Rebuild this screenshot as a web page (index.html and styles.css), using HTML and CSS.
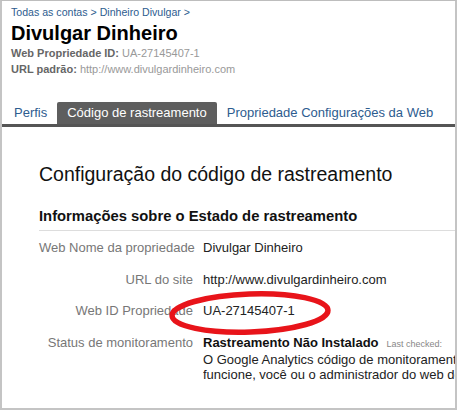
FILE: index.html
```html
<!DOCTYPE html>
<html lang="pt">
<head>
<meta charset="utf-8">
<title>Divulgar Dinheiro</title>
<link rel="stylesheet" href="styles.css">
</head>
<body>
<div class="frame">
  <div class="header">
    <div class="crumbs"><a href="#">Todas as contas</a> &gt; <a href="#">Dinheiro Divulgar</a> &gt;</div>
    <h1 class="title">Divulgar Dinheiro</h1>
    <div class="meta"><b>Web Propriedade ID:</b> <span>UA-27145407-1</span></div>
    <div class="meta"><b>URL padrão:</b> <span>http://www.divulgardinheiro.com</span></div>
  </div>
  <div class="tabs">
    <a class="tab" href="#">Perfis</a>
    <a class="tab active" href="#">Código de rastreamento</a>
    <a class="tab" href="#">Propriedade Configurações da Web</a>
  </div>
  <div class="content">
    <h2 class="section-title">Configuração do código de rastreamento</h2>
    <h3 class="sub-title">Informações sobre o Estado de rastreamento</h3>
    <div class="info">
      <div class="label">Web Nome da propriedade</div>
      <div class="value">Divulgar Dinheiro</div>
      <div class="label">URL do site</div>
      <div class="value">http://www.divulgardinheiro.com</div>
      <div class="label">Web ID Propriedade</div>
      <div class="value">UA-27145407-1</div>
      <div class="label">Status de monitoramento</div>
      <div class="value status">
        <div class="line"><b>Rastreamento Não Instalado</b><span class="checked">Last checked:</span></div>
        <div class="line">O Google Analytics código de monitoramento</div>
        <div class="line">funcione, você ou o administrador do web deste site</div>
      </div>
    </div>
    <svg class="circle" width="170" height="52" viewBox="0 0 170 52" aria-hidden="true">
      <ellipse cx="85" cy="26" rx="78" ry="19" fill="none" stroke="#e8141a" stroke-width="5.5" transform="rotate(-2 85 26)"/>
    </svg>
  </div>
</div>
</body>
</html>
```
FILE: styles.css
```css
html, body {
  margin: 0;
  padding: 0;
  background: #fff;
}
.frame {
  position: relative;
  width: 457px;
  height: 410px;
  box-sizing: border-box;
  border-top: 1px solid #bdbdbd;
  border-left: 2px solid #c4c4c4;
  border-right: 2px solid #c4c4c4;
  border-bottom: 2px solid #c4c4c4;
  overflow: hidden;
  font-family: "Liberation Sans", Arial, sans-serif;
  color: #222;
}
.header {
  padding: 4px 0 0 9px;
}
.crumbs {
  font-size: 10.6px;
  line-height: 14px;
  color: #2d5c8f;
}
.crumbs a {
  color: #2d5c8f;
  text-decoration: none;
}
.title {
  margin: 3px 0 0;
  font-size: 20px;
  line-height: 23px;
  font-weight: bold;
  color: #000;
}
.meta {
  font-size: 11px;
  line-height: 16px;
  color: #999;
  white-space: nowrap;
}
.meta b {
  color: #666;
}
.tabs {
  display: flex;
  margin-top: 25px;
  padding-left: 2px;
  border-bottom: 3px solid #555;
  width: 452px;
}
.tab {
  font-size: 13px;
  line-height: 22px;
  padding: 0 10px;
  color: #2d5c8f;
  text-decoration: none;
  white-space: nowrap;
}
.tab.active {
  background: #5e5e5e;
  color: #fff;
  border-radius: 2px 2px 0 0;
}
.content {
  position: relative;
  padding-left: 37px;
}
.section-title {
  margin: 35px 0 0;
  font-size: 19.5px;
  line-height: 24px;
  font-weight: normal;
  color: #111;
  white-space: nowrap;
}
.sub-title {
  margin: 21px 0 0;
  padding-bottom: 5px;
  font-size: 14.8px;
  line-height: 18px;
  font-weight: bold;
  color: #111;
  border-bottom: 1px solid #ddd;
  white-space: nowrap;
}
.info {
  display: grid;
  grid-template-columns: 154px 1fr;
  column-gap: 10px;
  row-gap: 16.5px;
  padding-top: 9px;
  font-size: 13px;
  line-height: 15px;
}
.label {
  text-align: right;
  color: #777;
  white-space: nowrap;
}
.value {
  color: #222;
  white-space: nowrap;
  overflow: hidden;
}
.status b {
  color: #111;
}
.checked {
  font-size: 9px;
  color: #888;
  margin-left: 8px;
}
.circle {
  position: absolute;
  left: 163px;
  top: 125px;
}
```
